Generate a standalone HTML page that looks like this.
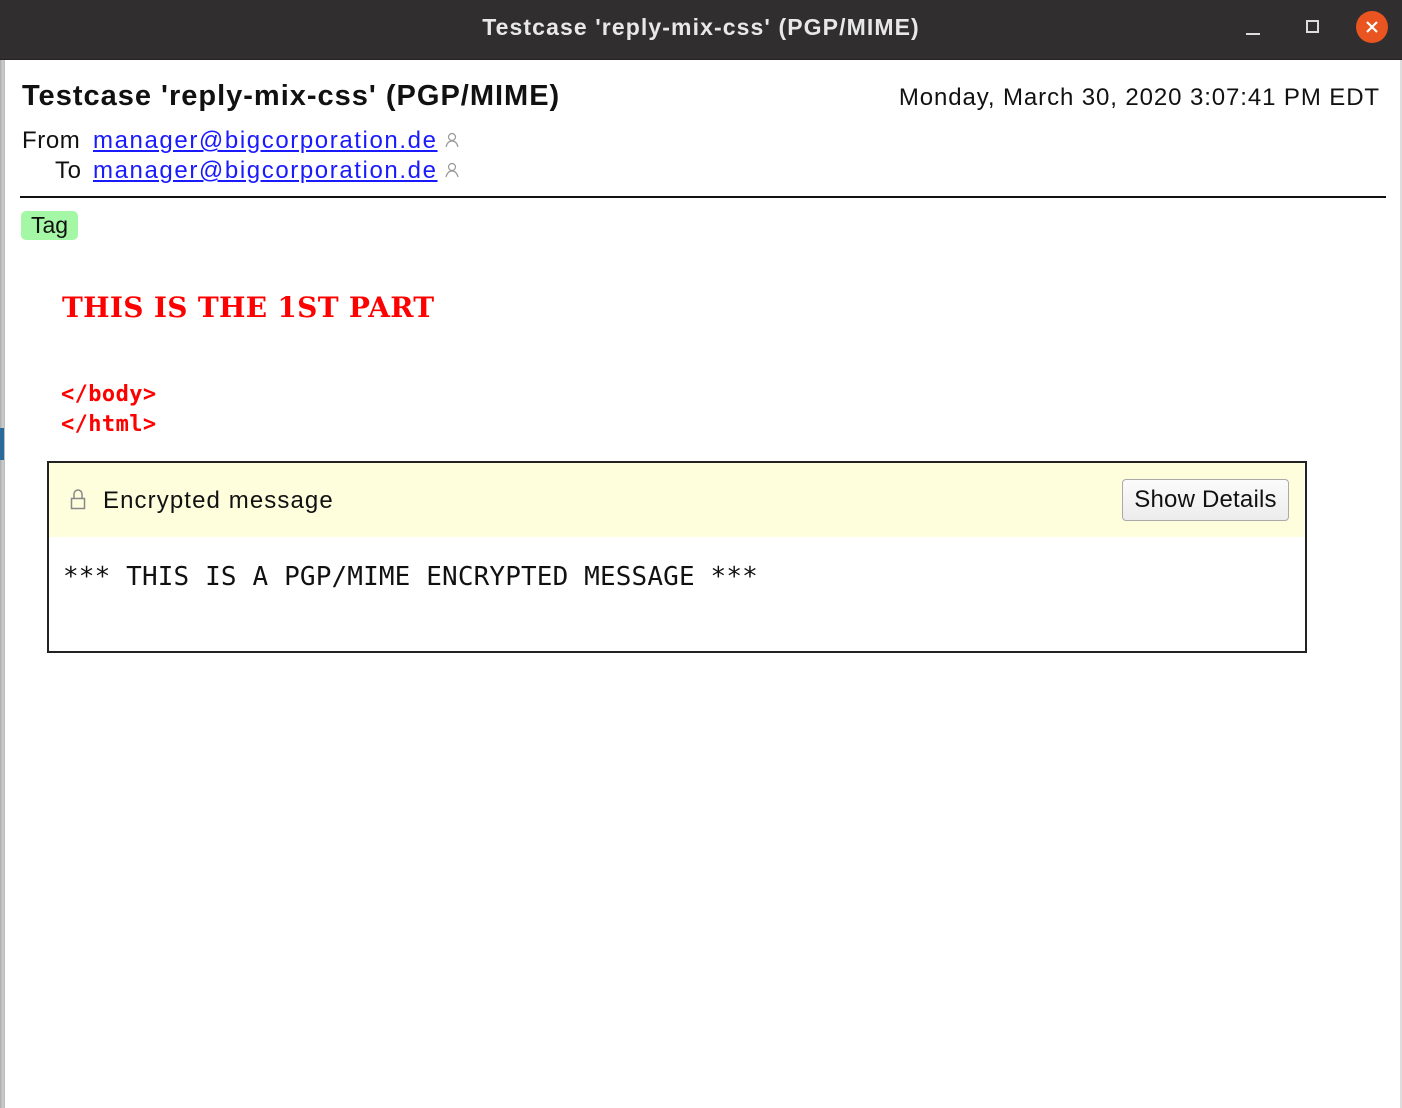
<!DOCTYPE html>
<html><head><meta charset="utf-8"><style>
*{margin:0;padding:0;box-sizing:border-box}
body{width:1402px;height:1108px;overflow:hidden;background:#fff;font-family:"Liberation Sans","DejaVu Sans",sans-serif;position:relative}
.tb{position:absolute;left:0;top:0;width:1402px;height:60px;background:#302e2e;border-bottom:1px solid #222}
.tt{position:absolute;left:0;width:1402px;top:14px;text-align:center;color:#e8e8e8;font-weight:bold;font-size:23px;letter-spacing:1.1px}
.lb{position:absolute;left:0;top:60px;width:5px;height:1048px;background:linear-gradient(90deg,#aaa,#ccc,#bbb)}
.rb{position:absolute;right:0;top:60px;width:2px;height:1048px;background:#ddd}
.a{position:absolute;white-space:nowrap}
a{color:#1a1aff;text-decoration:underline}
</style></head><body>
<div class="tb"><div class="tt">Testcase 'reply-mix-css' (PGP/MIME)</div>
<div class="a" style="left:1246px;top:33px;width:14px;height:2px;background:#ddd"></div>
<div class="a" style="left:1306px;top:20px;width:13px;height:13px;border:2px solid #ddd"></div>
<div class="a" style="left:1356px;top:11px;width:32px;height:32px;border-radius:50%;background:#e95420"><svg width="32" height="32"><path d="M11 11L21 21M21 11L11 21" stroke="#fff" stroke-width="2.2"/></svg></div>
</div>
<div class="lb"></div><div class="rb"></div>
<div class="a" style="left:0;top:428px;width:4px;height:32px;background:#2a6a9a"></div>
<div class="a" style="left:22px;top:80px;font-size:29px;font-weight:bold;color:#111;letter-spacing:1px">Testcase 'reply-mix-css' (PGP/MIME)</div>
<div class="a" style="right:22px;top:84px;font-size:24px;color:#111;letter-spacing:0.9px">Monday, March 30, 2020 3:07:41 PM EDT</div>
<div class="a" style="left:22px;top:127px;font-size:24px;color:#111;letter-spacing:0.6px">From</div>
<div class="a" style="left:55px;top:157px;font-size:24px;color:#111;letter-spacing:0.6px">To</div>
<div class="a" style="left:93px;top:127px;font-size:24px;letter-spacing:1.6px"><a>manager@bigcorporation.de</a></div>
<div class="a" style="left:93px;top:157px;font-size:24px;letter-spacing:1.6px"><a>manager@bigcorporation.de</a></div>
<svg class="a" style="left:444px;top:132px" width="16" height="16"><circle cx="8" cy="5" r="3.5" fill="none" stroke="#999" stroke-width="1.2"/><path d="M2 15c1-4 3-6 6-6s5 2 6 6" fill="none" stroke="#999" stroke-width="1.2"/></svg>
<svg class="a" style="left:444px;top:162px" width="16" height="16"><circle cx="8" cy="5" r="3.5" fill="none" stroke="#999" stroke-width="1.2"/><path d="M2 15c1-4 3-6 6-6s5 2 6 6" fill="none" stroke="#999" stroke-width="1.2"/></svg>
<div class="a" style="left:20px;top:196px;width:1366px;height:2px;background:#111"></div>
<div class="a" style="left:21px;top:211px;width:57px;height:29px;background:#a4f7a4;border-radius:5px;font-size:23px;line-height:29px;text-align:center;color:#111">Tag</div>
<div class="a" style="left:62px;top:291px;font-family:'DejaVu Serif',serif;font-weight:bold;font-size:28px;color:#f00;letter-spacing:0.3px">THIS IS THE 1ST PART</div>
<div class="a" style="left:61px;top:380px;font-family:'DejaVu Sans Mono','Liberation Mono',monospace;font-weight:bold;font-size:22px;line-height:30px;color:#f00;letter-spacing:0.4px">&lt;/body&gt;<br>&lt;/html&gt;</div>
<div class="a" style="left:47px;top:461px;width:1260px;height:192px;border:2px solid #222"></div>
<div class="a" style="left:49px;top:463px;width:1255px;height:74px;background:#fefedd"></div>
<div class="a" style="left:70px;top:488px;width:16px;height:22px">
<svg width="16" height="22" viewBox="0 0 16 22"><path d="M4 10V6a4 4 0 0 1 8 0v4" fill="none" stroke="#888" stroke-width="1.5"/><rect x="1.5" y="10.5" width="13" height="10" fill="none" stroke="#888" stroke-width="1.5"/></svg></div>
<div class="a" style="left:103px;top:487px;font-size:24px;color:#111;letter-spacing:1.1px">Encrypted message</div>
<div class="a" style="left:1122px;top:479px;width:167px;height:42px;border:1px solid #aaa;border-radius:4px;background:linear-gradient(#fbfbfb,#ececec);font-size:24px;line-height:40px;text-align:center;color:#111;letter-spacing:0.2px">Show Details</div>
<div class="a" style="left:63px;top:562px;font-family:'DejaVu Sans Mono','Liberation Mono',monospace;font-size:26px;color:#111;letter-spacing:0.14px">*** THIS IS A PGP/MIME ENCRYPTED MESSAGE ***</div>
</body></html>
